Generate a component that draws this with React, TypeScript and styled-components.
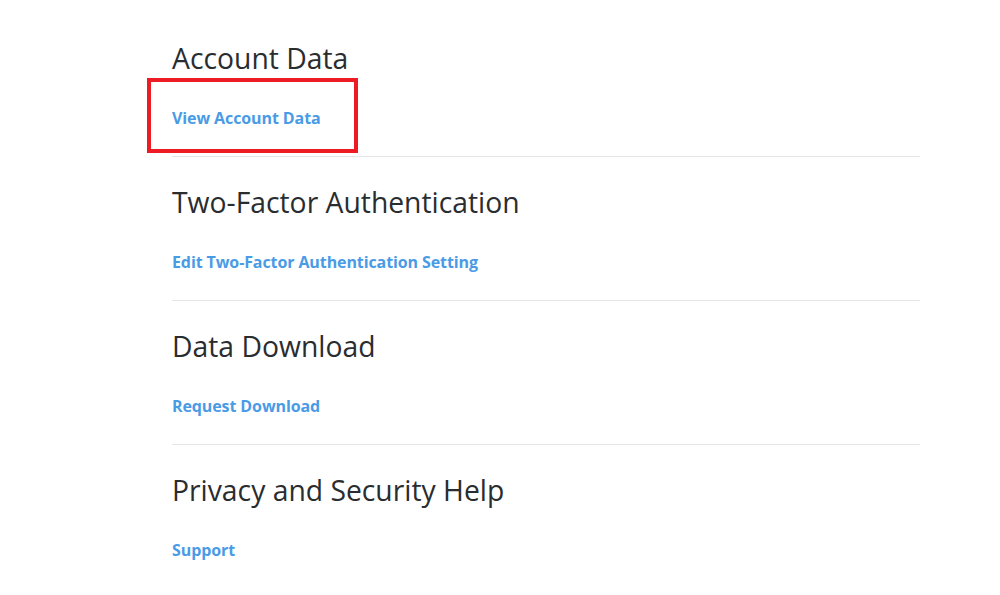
import React from "react";
import styled, { createGlobalStyle } from "styled-components";

const Global = createGlobalStyle`
  html, body { margin: 0; padding: 0; background: #ffffff; }
  body { font-family: "Segoe UI", "Open Sans", "Noto Sans", sans-serif; }
`;

const Page = styled.main`
  width: 1000px;
  height: 595px;
  box-sizing: border-box;
  padding: 13px 80px 0 172px;
  overflow: hidden;
`;

const Section = styled.section<{ $last?: boolean }>`
  display: flex;
  flex-direction: column;
  height: 144px;
  box-sizing: border-box;
  padding-top: 26px;
  border-bottom: ${(p) => (p.$last ? "none" : "1px solid #e6e6e6")};
`;

const Heading = styled.h2`
  margin: 0;
  font-size: 28.3px;
  font-weight: 400;
  line-height: 38px;
  color: #2a2d30;
  letter-spacing: 0;
`;

const LinkRow = styled.div`
  position: relative;
  align-self: flex-start;
  margin-top: 30px;
`;

const Link = styled.a`
  font-size: 16px;
  font-weight: 700;
  line-height: 22px;
  color: #4a9be6;
  text-decoration: none;
  letter-spacing: -0.1px;
  cursor: pointer;
`;

const Highlight = styled.span`
  position: absolute;
  left: -25px;
  top: -29px;
  width: 211px;
  height: 75px;
  box-sizing: border-box;
  border: 4px solid #ed1c24;
  pointer-events: none;
`;

const sections = [
  { title: "Account Data", link: "View Account Data", highlight: true },
  { title: "Two-Factor Authentication", link: "Edit Two-Factor Authentication Setting" },
  { title: "Data Download", link: "Request Download" },
  { title: "Privacy and Security Help", link: "Support" },
];

export default function App() {
  return (
    <>
      <Global />
      <Page>
        {sections.map((s, i) => (
          <Section key={s.title} $last={i === sections.length - 1}>
            <Heading>{s.title}</Heading>
            <LinkRow>
              <Link>{s.link}</Link>
              {s.highlight && <Highlight />}
            </LinkRow>
          </Section>
        ))}
      </Page>
    </>
  );
}
